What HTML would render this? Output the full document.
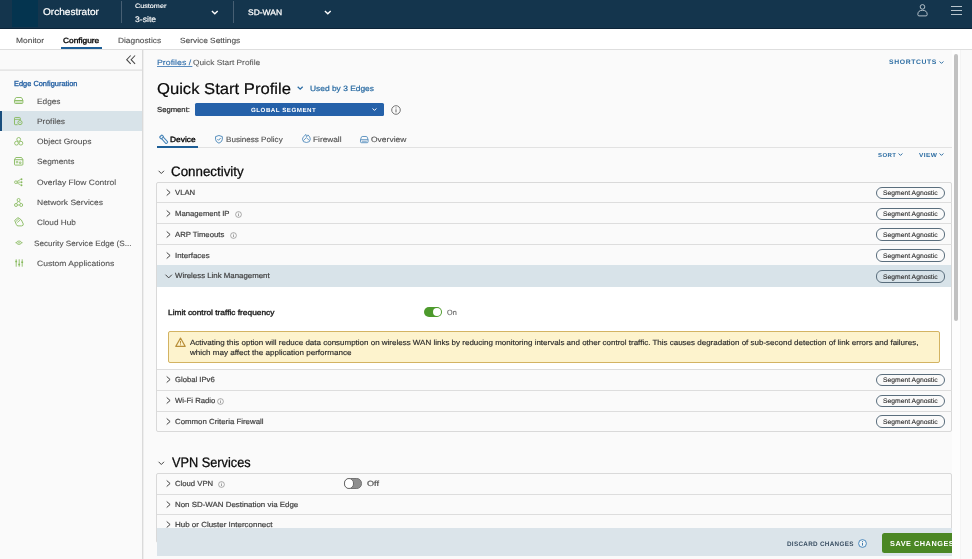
<!DOCTYPE html>
<html><head><meta charset="utf-8"><title>Orchestrator</title>
<style>
html,body{margin:0;padding:0;}
body{width:972px;height:559px;overflow:hidden;background:#fafafa;position:relative;font-family:"Liberation Sans",sans-serif;}
.a{position:absolute;box-sizing:border-box;}
.t{position:absolute;white-space:pre;line-height:12px;height:12px;transform-origin:0 50%;font-family:"Liberation Sans",sans-serif;z-index:2;}
svg{position:absolute;overflow:visible;}
#hdr{left:0;top:0;width:972px;height:29px;background:#14354d;border-bottom:1px solid #0c2438;}
#logo{left:12px;top:0;width:26px;height:27px;background:#04344f;}
.vd{width:1px;background:#475f73;top:1.3px;height:22px;}
#nav{left:0;top:29px;width:972px;height:20px;background:#ffffff;border-bottom:1px solid #dedede;height:21px;}
#side{left:0;top:50px;width:144px;height:509px;background:#fafafa;border-right:1px solid #eeeeee;}
#sideline{left:0;top:69px;width:142px;height:2px;background:#ececec;border-bottom:1px solid #e6e6e6;}
#sel{left:0;top:111px;width:142px;height:20px;background:#d8e3e9;}
#selbar{left:0;top:111px;width:2px;height:20px;background:#1a4f7e;}
.hl{height:1px;background:#dddddd;}
.panel{border:1px solid #d9d9d9;border-radius:2px;background:#fafafa;}
.pill{left:875.9px;width:69px;height:12.4px;border:1px solid #5a6e7d;border-radius:6px;background:transparent;z-index:1;}
#txt,#txt2{position:absolute;left:0;top:0;width:972px;height:559px;will-change:transform;text-rendering:geometricPrecision;}
#txt{z-index:2;}
#over{position:absolute;left:0;top:0;z-index:5;}
#txt2{z-index:10;}
#cover{position:absolute;left:0;top:0;z-index:20;}

</style></head>
<body>
<div class="a" id="hdr"></div>
<div class="a" id="logo"></div>
<div class="a vd" style="left:120.6px"></div>
<div class="a vd" style="left:233px"></div>
<!-- header chevrons -->
<svg style="left:211px;top:9.6px" width="7.6" height="5" viewBox="0 0 7.6 5"><path d="M0.9 0.9 L3.8 3.8 L6.7 0.9" fill="none" stroke="#fff" stroke-width="1.35"/></svg>
<svg style="left:323.8px;top:9.6px" width="7.6" height="5" viewBox="0 0 7.6 5"><path d="M0.9 0.9 L3.8 3.8 L6.7 0.9" fill="none" stroke="#fff" stroke-width="1.35"/></svg>
<!-- user icon -->
<svg style="left:917.1px;top:4.2px" width="11" height="13" viewBox="0 0 11 13"><circle cx="5.5" cy="2.9" r="2.3" fill="none" stroke="#c3ced6" stroke-width="0.9"/><path d="M0.8 10.6 C0.8 7.6 2.6 6.3 5.5 6.3 C8.4 6.3 10.2 7.6 10.2 10.6 C10.2 11.5 9.6 11.9 9 11.9 L2 11.9 C1.4 11.9 0.8 11.5 0.8 10.6 Z" fill="none" stroke="#c3ced6" stroke-width="0.9"/></svg>
<!-- hamburger -->
<div class="a" style="left:950.6px;top:6px;width:11.4px;height:1px;background:#b9c5cd"></div>
<div class="a" style="left:950.6px;top:10px;width:11.4px;height:1px;background:#b9c5cd"></div>
<div class="a" style="left:950.6px;top:14px;width:11.4px;height:1px;background:#b9c5cd"></div>

<div class="a" id="nav"></div>
<div class="a" style="left:61px;top:47.2px;width:40.5px;height:1.6px;background:#1d5e96"></div>

<div class="a" id="side"></div>
<div class="a" id="sideline"></div>
<div class="a" style="left:142px;top:50px;width:1px;height:509px;background:#dadada"></div>
<div class="a" id="sel"></div>
<div class="a" id="selbar"></div>
<!-- collapse icon -->
<svg style="left:125.6px;top:55.1px" width="10" height="9.4" viewBox="0 0 10 9.4"><path d="M4.7 0.5 L0.7 4.7 L4.7 8.9 M9.1 0.5 L5.1 4.7 L9.1 8.9" fill="none" stroke="#484848" stroke-width="1.05"/></svg>

<!-- main: title chevron -->
<svg style="left:296.6px;top:86.2px" width="6.4" height="4.6" viewBox="0 0 6.4 4.6"><path d="M0.7 0.7 L3.2 3.2 L5.7 0.7" fill="none" stroke="#2b6ca3" stroke-width="1.25"/></svg>
<!-- segment dropdown -->
<div class="a" style="left:195px;top:102.5px;width:189.3px;height:13.2px;background:#2561a9;border-radius:1.5px"></div>
<svg style="left:371.6px;top:108px" width="5" height="3.4" viewBox="0 0 5 3.4"><path d="M0.6 0.5 L2.5 2.4 L4.4 0.5" fill="none" stroke="#fff" stroke-width="1"/></svg>
<!-- info icon next to dropdown -->
<svg style="left:390.9px;top:104.9px" width="10" height="10" viewBox="0 0 10 10"><circle cx="5" cy="5" r="4.3" fill="none" stroke="#666" stroke-width="0.9"/><path d="M5 4.3 V7.4 M5 2.5 V3.4" stroke="#666" stroke-width="1"/></svg>
<!-- shortcuts chevron -->
<svg style="left:939.2px;top:61.3px" width="5" height="3.4" viewBox="0 0 5 3.4"><path d="M0.6 0.5 L2.5 2.4 L4.4 0.5" fill="none" stroke="#2e6ea3" stroke-width="1"/></svg>

<!-- tabs -->
<div class="a hl" style="left:157px;top:147.1px;width:795px;background:#e2e2e2"></div>
<div class="a" style="left:157.4px;top:145.7px;width:40.4px;height:2px;background:#1d5e96"></div>
<!-- sort/view chevrons -->
<svg style="left:898.3px;top:153.4px" width="5" height="3.4" viewBox="0 0 5 3.4"><path d="M0.6 0.5 L2.5 2.4 L4.4 0.5" fill="none" stroke="#2e6ea3" stroke-width="1"/></svg>
<svg style="left:939.4px;top:153.4px" width="5" height="3.4" viewBox="0 0 5 3.4"><path d="M0.6 0.5 L2.5 2.4 L4.4 0.5" fill="none" stroke="#2e6ea3" stroke-width="1"/></svg>

<!-- heading chevrons -->
<svg style="left:158px;top:169.5px" width="7" height="5" viewBox="0 0 7 5"><path d="M0.6 0.8 L3.3 3.5 L6 0.8" fill="none" stroke="#3a3a3a" stroke-width="0.95"/></svg>
<svg style="left:158px;top:460.6px" width="7" height="5" viewBox="0 0 7 5"><path d="M0.6 0.8 L3.3 3.5 L6 0.8" fill="none" stroke="#3a3a3a" stroke-width="0.95"/></svg>

<!-- Connectivity panel -->
<div class="a panel" style="left:156px;top:181.7px;width:796px;height:250.8px"></div>
<div class="a hl" style="left:157px;top:202.3px;width:794.5px"></div>
<div class="a hl" style="left:157px;top:223.2px;width:794.5px"></div>
<div class="a hl" style="left:157px;top:244.1px;width:794.5px"></div>
<div class="a" style="left:157px;top:265.2px;width:794px;height:21.4px;background:#d8e3e9"></div>
<div class="a" style="left:157px;top:286.6px;width:794px;height:82px;background:#ffffff"></div>
<div class="a hl" style="left:157px;top:368.5px;width:794.5px"></div>
<div class="a hl" style="left:157px;top:389.5px;width:794.5px"></div>
<div class="a hl" style="left:157px;top:410.7px;width:794.5px"></div>

<!-- VPN panel -->
<div class="a panel" style="left:156px;top:473px;width:796px;height:70px"></div>
<div class="a hl" style="left:157px;top:493.5px;width:794.5px"></div>
<div class="a hl" style="left:157px;top:514.2px;width:794.5px"></div>

<!-- toggle on -->
<div class="a" style="left:423.5px;top:307.3px;width:18.6px;height:10.2px;border-radius:5.1px;background:#4d9a2c"></div>
<div class="a" style="left:432.9px;top:308.3px;width:8.2px;height:8.2px;border-radius:50%;background:#fff"></div>
<!-- toggle off -->
<div class="a" style="left:343.7px;top:478.3px;width:18.7px;height:10.4px;border-radius:5.2px;background:#8e8e8e;border:1px solid #747474"></div>
<div class="a" style="left:343.7px;top:478.3px;width:10.4px;height:10.4px;border-radius:50%;background:#fff;border:1px solid #6a6a6a"></div>

<!-- warning -->
<div class="a" style="left:168.2px;top:330.6px;width:772px;height:32.8px;background:#fdf3cd;border:1px solid #d3b362;border-radius:2px"></div>
<svg style="left:174.6px;top:336.7px" width="11" height="10.4" viewBox="0 0 11 10.4"><path d="M5.5 1 L10.2 9.4 L0.8 9.4 Z" fill="none" stroke="#b98f3a" stroke-width="1.15" stroke-linejoin="round"/><path d="M5.5 3.9 V6.6 M5.5 7.4 V8.3" stroke="#b98f3a" stroke-width="1"/></svg>
<!-- sidebar icons -->

<!-- Edges: drive -->
<svg style="left:14px;top:97.2px" width="9.4" height="7" viewBox="0 0 9.4 7"><rect x="0.9" y="3.9" width="7.6" height="2.2" fill="#86b95c" opacity="0.35"/><path d="M0.5 3.4 L1.6 0.9 Q1.8 0.5 2.3 0.5 L7.1 0.5 Q7.6 0.5 7.8 0.9 L8.9 3.4 L8.9 5.6 Q8.9 6.5 8 6.5 L1.4 6.5 Q0.5 6.5 0.5 5.6 Z M0.5 3.5 L8.9 3.5" fill="none" stroke="#86b95c" stroke-width="0.9"/></svg>
<!-- Profiles: doc with gear -->
<svg style="left:14px;top:117.2px" width="9" height="8.4" viewBox="0 0 9 8.4"><path d="M3.6 7.7 L1.2 7.7 Q0.5 7.7 0.5 7 L0.5 1.2 Q0.5 0.5 1.2 0.5 L5.6 0.5 Q6.3 0.5 6.3 1.2 L6.3 3" fill="none" stroke="#86b95c" stroke-width="0.9"/><path d="M0.6 2.4 L6.2 2.4" stroke="#86b95c" stroke-width="0.8"/><circle cx="6" cy="5.6" r="2.1" fill="none" stroke="#86b95c" stroke-width="0.9"/><circle cx="6" cy="5.6" r="0.6" fill="#86b95c"/></svg>
<!-- Object Groups: three circles -->
<svg style="left:14px;top:137.2px" width="9.4" height="8.8" viewBox="0 0 9.4 8.8"><circle cx="4.7" cy="2.4" r="1.9" fill="none" stroke="#86b95c" stroke-width="0.85"/><circle cx="2.5" cy="6.2" r="1.9" fill="none" stroke="#86b95c" stroke-width="0.85"/><circle cx="6.9" cy="6.2" r="1.9" fill="none" stroke="#86b95c" stroke-width="0.85"/></svg>
<!-- Segments: box -->
<svg style="left:14px;top:157.4px" width="9.4" height="8.6" viewBox="0 0 9.4 8.6"><path d="M0.5 2.6 L1.8 0.5 L7.6 0.5 L8.9 2.6 L8.9 7.3 Q8.9 8.1 8.1 8.1 L1.3 8.1 Q0.5 8.1 0.5 7.3 Z M0.5 2.7 L8.9 2.7" fill="none" stroke="#86b95c" stroke-width="0.9"/><path d="M2.3 4.4 L3.8 4.4 L3.8 5.8 L2.3 5.8 Z M5.4 5 L7 5 L7 6.4 L5.4 6.4 Z" fill="none" stroke="#86b95c" stroke-width="0.7"/></svg>
<!-- Overlay flow control -->
<svg style="left:14.2px;top:178.2px" width="9.2" height="8.4" viewBox="0 0 9.2 8.4"><circle cx="1.9" cy="4.2" r="1.35" fill="none" stroke="#86b95c" stroke-width="0.8"/><path d="M3.2 4.2 L6.6 4.2 M3 3.5 L6.6 1.5 M3 4.9 L6.6 6.9" fill="none" stroke="#86b95c" stroke-width="0.75"/><circle cx="7.5" cy="1.2" r="0.95" fill="#86b95c"/><circle cx="7.5" cy="4.2" r="0.95" fill="#86b95c"/><circle cx="7.5" cy="7.2" r="0.95" fill="#86b95c"/></svg>
<!-- Network services -->
<svg style="left:14.2px;top:197.8px" width="9.2" height="9.2" viewBox="0 0 9.2 9.2"><circle cx="4.6" cy="2" r="1.5" fill="none" stroke="#86b95c" stroke-width="0.85"/><circle cx="2" cy="7" r="1.5" fill="none" stroke="#86b95c" stroke-width="0.85"/><circle cx="7.2" cy="7" r="1.5" fill="none" stroke="#86b95c" stroke-width="0.85"/><path d="M4 3.4 L2.6 5.6 M5.2 3.4 L6.6 5.6 M3.5 7 L5.7 7" stroke="#86b95c" stroke-width="0.8"/></svg>
<!-- Cloud hub -->
<svg style="left:13.8px;top:217.4px" width="10" height="9.6" viewBox="0 0 10 9.6"><path d="M0.7 3.4 L4 0.6 L7.4 3 L9.3 7 Q9.5 8.8 7.6 8.9 L4 8.9 Q2.6 8.8 2.3 7.4 Z" fill="none" stroke="#86b95c" stroke-width="0.9" stroke-linejoin="round"/><path d="M2 4.4 L5 1.6 M3.2 5.6 L6.4 2.8" stroke="#86b95c" stroke-width="0.8"/></svg>
<!-- SSE -->
<svg style="left:14.6px;top:240.2px" width="8" height="5.4" viewBox="0 0 8 5.4"><path d="M0.4 2.7 L1.8 2.7 M6.2 2.7 L7.6 2.7" stroke="#86b95c" stroke-width="0.8"/><ellipse cx="4" cy="2.7" rx="2.3" ry="1.7" fill="none" stroke="#86b95c" stroke-width="0.85"/><circle cx="4" cy="2.7" r="0.7" fill="#86b95c"/></svg>
<!-- Custom apps: sliders -->
<svg style="left:14.6px;top:259px" width="8.4" height="8" viewBox="0 0 8.4 8"><path d="M1.2 0.3 L1.2 7.7 M4.2 0.3 L4.2 7.7 M7.2 0.3 L7.2 7.7" stroke="#86b95c" stroke-width="0.85"/><path d="M0.3 2.4 L2.1 2.4 M3.3 5.4 L5.1 5.4 M6.3 3.2 L8.1 3.2" stroke="#86b95c" stroke-width="1.5"/></svg>

<!-- tab icons -->
<!-- device (wrench/plug tilted) -->
<svg style="left:158.6px;top:134.8px" width="9.6" height="8.8" viewBox="0 0 9.6 8.8"><g transform="rotate(-42 4.8 4.4)"><rect x="3.1" y="-0.2" width="3.4" height="2.6" rx="0.6" fill="none" stroke="#4a86b9" stroke-width="1.1"/><path d="M3.6 2.4 L3.6 8.6 Q3.6 9.2 4.2 9.2 L5.4 9.2 Q6 9.2 6 8.6 L6 2.4" fill="none" stroke="#4a86b9" stroke-width="1.05"/></g></svg>
<!-- business policy: shield check -->
<svg style="left:214.6px;top:134.9px" width="7.9" height="8.7" viewBox="0 0 8.4 9.2"><path d="M4.2 0.5 L7.8 1.7 L7.8 4.6 Q7.8 7.2 4.2 8.7 Q0.6 7.2 0.6 4.6 L0.6 1.7 Z" fill="none" stroke="#4a86b9" stroke-width="1" stroke-linejoin="round"/><path d="M2.6 4.4 L3.8 5.6 L6 3.2" fill="none" stroke="#4a86b9" stroke-width="1"/></svg>
<!-- firewall: flame -->
<svg style="left:301.6px;top:134.4px" width="8.8" height="9" viewBox="0 0 8.8 9"><path d="M4 0.5 Q5 1.6 4.4 2.6 Q6.2 2 6 0.9 Q8.3 3 8.3 5.2 Q8.3 8.5 4.4 8.5 Q0.5 8.5 0.5 5.2 Q0.5 3 2.6 2 Q2.8 1 4 0.5 Z" fill="none" stroke="#4a86b9" stroke-width="0.85" stroke-linejoin="round"/><path d="M1.4 6.6 L4.4 3.6 L7.2 6.4" fill="none" stroke="#4a86b9" stroke-width="0.8"/></svg>
<!-- overview: drive -->
<svg style="left:359.6px;top:135.8px" width="8.6" height="7.2" viewBox="0 0 8.6 7.2"><path d="M0.5 3.6 L1.5 0.9 Q1.7 0.5 2.2 0.5 L6.4 0.5 Q6.9 0.5 7.1 0.9 L8.1 3.6 L8.1 5.8 Q8.1 6.7 7.2 6.7 L1.4 6.7 Q0.5 6.7 0.5 5.8 Z M0.5 3.7 L8.1 3.7" fill="none" stroke="#4a86b9" stroke-width="0.85"/><path d="M1.8 5.3 L6.8 5.3" stroke="#4a86b9" stroke-width="0.7"/></svg>
<div class="a pill" style="top:186.60px"></div>
<div class="a pill" style="top:207.50px"></div>
<div class="a pill" style="top:228.40px"></div>
<div class="a pill" style="top:249.30px"></div>
<div class="a pill" style="top:270.20px"></div>
<div class="a pill" style="top:373.60px"></div>
<div class="a pill" style="top:394.50px"></div>
<div class="a pill" style="top:415.40px"></div>
<svg style="left:165.8px;top:189.20px" width="5" height="7" viewBox="0 0 5 7"><path d="M0.7 0.5 L4.1 3.5 L0.7 6.5" fill="none" stroke="#3a3a3a" stroke-width="0.95"/></svg>
<svg style="left:165.8px;top:210.10px" width="5" height="7" viewBox="0 0 5 7"><path d="M0.7 0.5 L4.1 3.5 L0.7 6.5" fill="none" stroke="#3a3a3a" stroke-width="0.95"/></svg>
<svg style="left:165.8px;top:231.00px" width="5" height="7" viewBox="0 0 5 7"><path d="M0.7 0.5 L4.1 3.5 L0.7 6.5" fill="none" stroke="#3a3a3a" stroke-width="0.95"/></svg>
<svg style="left:165.8px;top:251.80px" width="5" height="7" viewBox="0 0 5 7"><path d="M0.7 0.5 L4.1 3.5 L0.7 6.5" fill="none" stroke="#3a3a3a" stroke-width="0.95"/></svg>
<svg style="left:165.8px;top:376.00px" width="5" height="7" viewBox="0 0 5 7"><path d="M0.7 0.5 L4.1 3.5 L0.7 6.5" fill="none" stroke="#3a3a3a" stroke-width="0.95"/></svg>
<svg style="left:165.8px;top:396.90px" width="5" height="7" viewBox="0 0 5 7"><path d="M0.7 0.5 L4.1 3.5 L0.7 6.5" fill="none" stroke="#3a3a3a" stroke-width="0.95"/></svg>
<svg style="left:165.8px;top:417.90px" width="5" height="7" viewBox="0 0 5 7"><path d="M0.7 0.5 L4.1 3.5 L0.7 6.5" fill="none" stroke="#3a3a3a" stroke-width="0.95"/></svg>
<svg style="left:165.8px;top:480.00px" width="5" height="7" viewBox="0 0 5 7"><path d="M0.7 0.5 L4.1 3.5 L0.7 6.5" fill="none" stroke="#3a3a3a" stroke-width="0.95"/></svg>
<svg style="left:165.8px;top:500.70px" width="5" height="7" viewBox="0 0 5 7"><path d="M0.7 0.5 L4.1 3.5 L0.7 6.5" fill="none" stroke="#3a3a3a" stroke-width="0.95"/></svg>
<svg style="left:165.8px;top:521.30px" width="5" height="7" viewBox="0 0 5 7"><path d="M0.7 0.5 L4.1 3.5 L0.7 6.5" fill="none" stroke="#3a3a3a" stroke-width="0.95"/></svg>
<svg style="left:165.0px;top:274.2px" width="7.4" height="5" viewBox="0 0 7.4 5"><path d="M0.5 0.7 L3.7 3.9 L6.9 0.7" fill="none" stroke="#3a3a3a" stroke-width="0.95"/></svg>
<svg style="left:235.40px;top:210.60px" width="7" height="7" viewBox="0 0 7 7"><circle cx="3.5" cy="3.5" r="2.9" fill="none" stroke="#777" stroke-width="0.6"/><path d="M3.5 3.1 V5.1 M3.5 1.8 V2.5" stroke="#777" stroke-width="0.7"/></svg>
<svg style="left:230.20px;top:231.50px" width="7" height="7" viewBox="0 0 7 7"><circle cx="3.5" cy="3.5" r="2.9" fill="none" stroke="#777" stroke-width="0.6"/><path d="M3.5 3.1 V5.1 M3.5 1.8 V2.5" stroke="#777" stroke-width="0.7"/></svg>
<svg style="left:216.90px;top:397.70px" width="7" height="7" viewBox="0 0 7 7"><circle cx="3.5" cy="3.5" r="2.9" fill="none" stroke="#777" stroke-width="0.6"/><path d="M3.5 3.1 V5.1 M3.5 1.8 V2.5" stroke="#777" stroke-width="0.7"/></svg>
<svg style="left:218.30px;top:480.80px" width="7" height="7" viewBox="0 0 7 7"><circle cx="3.5" cy="3.5" r="2.9" fill="none" stroke="#777" stroke-width="0.6"/><path d="M3.5 3.1 V5.1 M3.5 1.8 V2.5" stroke="#777" stroke-width="0.7"/></svg>
<div id="txt">
<span class="t" id="s0" style="left:42.70px;top:7.08px;font-size:9.7px;color:#ffffff;-webkit-text-stroke:0.22px #ffffff;transform:scaleX(1.0382);">Orchestrator</span>
<span class="t" id="s1" style="left:135.00px;top:0.96px;font-size:6.3px;color:#ffffff;-webkit-text-stroke:0.12px #ffffff;transform:scaleX(1.1467);">Customer</span>
<span class="t" id="s2" style="left:135.00px;top:14.47px;font-size:8.2px;color:#ffffff;-webkit-text-stroke:0.15px #ffffff;transform:scaleX(1.0534);">3-site</span>
<span class="t" id="s3" style="left:247.90px;top:6.52px;font-size:8.0px;color:#ffffff;-webkit-text-stroke:0.25px #ffffff;transform:scaleX(1.0573);">SD-WAN</span>
<span class="t" id="s4" style="left:15.90px;top:34.62px;font-size:7.6px;color:#4f4f4f;-webkit-text-stroke:0.12px #4f4f4f;transform:scaleX(1.1094);">Monitor</span>
<span class="t" id="s5" style="left:63.00px;top:34.62px;font-size:7.6px;color:#000000;-webkit-text-stroke:0.32px #000000;transform:scaleX(1.0991);">Configure</span>
<span class="t" id="s6" style="left:118.20px;top:34.62px;font-size:7.6px;color:#4f4f4f;-webkit-text-stroke:0.12px #4f4f4f;transform:scaleX(1.0977);">Diagnostics</span>
<span class="t" id="s7" style="left:179.60px;top:34.62px;font-size:7.6px;color:#4f4f4f;-webkit-text-stroke:0.12px #4f4f4f;transform:scaleX(1.0970);">Service Settings</span>
<span class="t" id="s8" style="left:13.50px;top:77.70px;font-size:7.3px;color:#1c5a9f;-webkit-text-stroke:0.3px #1c5a9f;transform:scaleX(1.0163);">Edge Configuration</span>
<span class="t" id="s9" style="left:36.90px;top:95.60px;font-size:7.7px;color:#525252;-webkit-text-stroke:0.1px #525252;transform:scaleX(1.0774);">Edges</span>
<span class="t" id="s10" style="left:36.90px;top:115.60px;font-size:7.7px;color:#525252;-webkit-text-stroke:0.1px #525252;transform:scaleX(1.0920);">Profiles</span>
<span class="t" id="s11" style="left:36.90px;top:135.60px;font-size:7.7px;color:#525252;-webkit-text-stroke:0.1px #525252;transform:scaleX(1.0973);">Object Groups</span>
<span class="t" id="s12" style="left:36.90px;top:155.60px;font-size:7.7px;color:#525252;-webkit-text-stroke:0.1px #525252;transform:scaleX(1.0801);">Segments</span>
<span class="t" id="s13" style="left:37.00px;top:176.60px;font-size:7.7px;color:#525252;-webkit-text-stroke:0.1px #525252;transform:scaleX(1.1020);">Overlay Flow Control</span>
<span class="t" id="s14" style="left:37.00px;top:196.60px;font-size:7.7px;color:#525252;-webkit-text-stroke:0.1px #525252;transform:scaleX(1.1034);">Network Services</span>
<span class="t" id="s15" style="left:37.00px;top:216.60px;font-size:7.7px;color:#525252;-webkit-text-stroke:0.1px #525252;transform:scaleX(1.0680);">Cloud Hub</span>
<span class="t" id="s16" style="left:34.40px;top:237.60px;font-size:7.7px;color:#525252;-webkit-text-stroke:0.1px #525252;transform:scaleX(1.0612);">Security Service Edge (S...</span>
<span class="t" id="s17" style="left:37.00px;top:257.60px;font-size:7.7px;color:#525252;-webkit-text-stroke:0.1px #525252;transform:scaleX(1.1083);">Custom Applications</span>
<span class="t" id="s18" style="left:156.80px;top:56.62px;font-size:7.6px;color:#2a6aa8;-webkit-text-stroke:0.1px #2a6aa8;transform:scaleX(1.1575);text-decoration:underline;text-decoration-thickness:0.6px;text-underline-offset:0.6px;text-decoration-color:#5b8dbf;">Profiles /</span>
<span class="t" id="s19" style="left:189.00px;top:56.62px;font-size:7.6px;color:#2a6aa8;transform:scaleX(1.6000);text-decoration:underline;text-decoration-thickness:0.6px;text-underline-offset:0.6px;text-decoration-color:#5b8dbf;"> </span>
<span class="t" id="s20" style="left:192.80px;top:56.62px;font-size:7.6px;color:#5a5a5a;-webkit-text-stroke:0.1px #5a5a5a;transform:scaleX(1.0980);">Quick Start Profile</span>
<span class="t" id="s21" style="left:156.60px;top:83.52px;font-size:15.7px;color:#0a0a0a;-webkit-text-stroke:0.2px #0a0a0a;transform:scaleX(1.0592);">Quick Start Profile</span>
<span class="t" id="s22" style="left:310.00px;top:82.62px;font-size:7.6px;color:#2b6ca3;-webkit-text-stroke:0.22px #2b6ca3;transform:scaleX(1.1064);">Used by 3 Edges</span>
<span class="t" id="s23" style="left:156.80px;top:103.70px;font-size:7.3px;color:#2b2b2b;-webkit-text-stroke:0.22px #2b2b2b;transform:scaleX(1.0533);">Segment:</span>
<span class="t" id="s24" style="left:251.20px;top:105.04px;font-size:6.0px;color:#ffffff;font-weight:700;letter-spacing:0.45px;transform:scaleX(1.0383);">GLOBAL SEGMENT</span>
<span class="t" id="s25" style="left:888.80px;top:56.88px;font-size:6.6px;color:#2e6ea3;font-weight:700;letter-spacing:0.6px;transform:scaleX(1.0341);">SHORTCUTS</span>
<span class="t" id="s26" style="left:170.30px;top:133.60px;font-size:7.7px;color:#000000;-webkit-text-stroke:0.32px #000000;transform:scaleX(1.0936);">Device</span>
<span class="t" id="s27" style="left:225.70px;top:133.60px;font-size:7.7px;color:#4f4f4f;-webkit-text-stroke:0.12px #4f4f4f;transform:scaleX(1.0530);">Business Policy</span>
<span class="t" id="s28" style="left:312.80px;top:133.60px;font-size:7.7px;color:#4f4f4f;-webkit-text-stroke:0.12px #4f4f4f;transform:scaleX(1.0761);">Firewall</span>
<span class="t" id="s29" style="left:370.60px;top:133.60px;font-size:7.7px;color:#4f4f4f;-webkit-text-stroke:0.12px #4f4f4f;transform:scaleX(1.1046);">Overview</span>
<span class="t" id="s30" style="left:878.00px;top:150.07px;font-size:5.9px;color:#2e6ea3;font-weight:700;letter-spacing:0.4px;transform:scaleX(1.0245);">SORT</span>
<span class="t" id="s31" style="left:918.70px;top:150.07px;font-size:5.9px;color:#2e6ea3;font-weight:700;letter-spacing:0.4px;transform:scaleX(1.1073);">VIEW</span>
<span class="t" id="s32" style="left:171.20px;top:166.04px;font-size:13.7px;color:#0a0a0a;-webkit-text-stroke:0.28px #0a0a0a;transform:scaleX(0.9750);">Connectivity</span>
<span class="t" id="s33" style="left:171.60px;top:457.04px;font-size:13.7px;color:#0a0a0a;-webkit-text-stroke:0.28px #0a0a0a;transform:scaleX(0.9309);">VPN Services</span>
<span class="t" id="s34" style="left:174.70px;top:186.68px;font-size:7.4px;color:#424242;-webkit-text-stroke:0.2px #424242;transform:scaleX(1.0460);">VLAN</span>
<span class="t" id="s35" style="left:174.70px;top:207.68px;font-size:7.4px;color:#424242;-webkit-text-stroke:0.2px #424242;transform:scaleX(1.0443);">Management IP</span>
<span class="t" id="s36" style="left:174.70px;top:228.68px;font-size:7.4px;color:#424242;-webkit-text-stroke:0.2px #424242;transform:scaleX(1.0465);">ARP Timeouts</span>
<span class="t" id="s37" style="left:174.70px;top:249.68px;font-size:7.4px;color:#424242;-webkit-text-stroke:0.2px #424242;transform:scaleX(1.0662);">Interfaces</span>
<span class="t" id="s38" style="left:174.70px;top:269.68px;font-size:7.4px;color:#424242;-webkit-text-stroke:0.2px #424242;transform:scaleX(1.0612);">Wireless Link Management</span>
<span class="t" id="s39" style="left:174.70px;top:373.68px;font-size:7.4px;color:#424242;-webkit-text-stroke:0.2px #424242;transform:scaleX(1.0388);">Global IPv6</span>
<span class="t" id="s40" style="left:174.70px;top:394.68px;font-size:7.4px;color:#424242;-webkit-text-stroke:0.2px #424242;transform:scaleX(1.0438);">Wi-Fi Radio</span>
<span class="t" id="s41" style="left:174.70px;top:415.68px;font-size:7.4px;color:#424242;-webkit-text-stroke:0.2px #424242;transform:scaleX(1.0615);">Common Criteria Firewall</span>
<span class="t" id="s42" style="left:174.70px;top:477.68px;font-size:7.4px;color:#424242;-webkit-text-stroke:0.2px #424242;transform:scaleX(1.0421);">Cloud VPN</span>
<span class="t" id="s43" style="left:174.70px;top:498.68px;font-size:7.4px;color:#424242;-webkit-text-stroke:0.2px #424242;transform:scaleX(1.0699);">Non SD-WAN Destination via Edge</span>
<span class="t" id="s44" style="left:174.70px;top:518.68px;font-size:7.4px;color:#424242;-webkit-text-stroke:0.2px #424242;transform:scaleX(1.0788);">Hub or Cluster Interconnect</span>
<span class="t" id="s45" style="left:883.20px;top:187.88px;font-size:6.6px;color:#2f2f2f;-webkit-text-stroke:0.12px #2f2f2f;transform:scaleX(1.0272);">Segment Agnostic</span>
<span class="t" id="s46" style="left:883.20px;top:208.88px;font-size:6.6px;color:#2f2f2f;-webkit-text-stroke:0.12px #2f2f2f;transform:scaleX(1.0272);">Segment Agnostic</span>
<span class="t" id="s47" style="left:883.20px;top:229.88px;font-size:6.6px;color:#2f2f2f;-webkit-text-stroke:0.12px #2f2f2f;transform:scaleX(1.0272);">Segment Agnostic</span>
<span class="t" id="s48" style="left:883.20px;top:250.88px;font-size:6.6px;color:#2f2f2f;-webkit-text-stroke:0.12px #2f2f2f;transform:scaleX(1.0272);">Segment Agnostic</span>
<span class="t" id="s49" style="left:883.20px;top:271.88px;font-size:6.6px;color:#2f2f2f;-webkit-text-stroke:0.12px #2f2f2f;transform:scaleX(1.0272);">Segment Agnostic</span>
<span class="t" id="s50" style="left:883.20px;top:374.88px;font-size:6.6px;color:#2f2f2f;-webkit-text-stroke:0.12px #2f2f2f;transform:scaleX(1.0272);">Segment Agnostic</span>
<span class="t" id="s51" style="left:883.20px;top:395.88px;font-size:6.6px;color:#2f2f2f;-webkit-text-stroke:0.12px #2f2f2f;transform:scaleX(1.0272);">Segment Agnostic</span>
<span class="t" id="s52" style="left:883.20px;top:416.88px;font-size:6.6px;color:#2f2f2f;-webkit-text-stroke:0.12px #2f2f2f;transform:scaleX(1.0272);">Segment Agnostic</span>
<span class="t" id="s53" style="left:168.40px;top:306.65px;font-size:7.5px;color:#1d1d1d;-webkit-text-stroke:0.36px #1d1d1d;transform:scaleX(1.1112);">Limit control traffic frequency</span>
<span class="t" id="s54" style="left:447.30px;top:306.62px;font-size:7.6px;color:#5a5a5a;-webkit-text-stroke:0.1px #5a5a5a;transform:scaleX(0.9565);">On</span>
<span class="t" id="s55" style="left:367.20px;top:477.62px;font-size:7.6px;color:#505050;-webkit-text-stroke:0.2px #505050;transform:scaleX(1.2000);">Off</span>
<span class="t" id="s56" style="left:189.60px;top:336.68px;font-size:7.4px;color:#2b2b2b;-webkit-text-stroke:0.16px #2b2b2b;transform:scaleX(1.0807);">Activating this option will reduce data consumption on wireless WAN links by reducing monitoring intervals and other control traffic. This causes degradation of sub-second detection of link errors and failures,</span>
<span class="t" id="s57" style="left:189.60px;top:346.68px;font-size:7.4px;color:#2b2b2b;-webkit-text-stroke:0.16px #2b2b2b;transform:scaleX(1.0893);">which may affect the application performance</span>
</div>
<div id="over">
<!-- footer bar -->
<div class="a" style="left:156.5px;top:527.6px;width:795.5px;height:28px;background:#dbe4ea"></div>
<div class="a" style="left:882.3px;top:533.2px;width:75px;height:20.3px;background:#4b8724;border-radius:2.5px"></div>
<svg style="left:858px;top:538.9px" width="9" height="9" viewBox="0 0 9 9"><circle cx="4.5" cy="4.5" r="3.9" fill="#eef3f6" stroke="#3a7db5" stroke-width="0.9"/><path d="M4.5 3.8 V6.6 M4.5 2.1 V3" stroke="#2e6ea3" stroke-width="0.9"/></svg>

</div>
<div id="txt2">
<span class="t" id="s58" style="left:786.80px;top:538.94px;font-size:6.4px;color:#3a4f63;font-weight:700;letter-spacing:0.3px;transform:scaleX(0.9902);">DISCARD CHANGES</span>
<span class="t" id="s59" style="left:889.90px;top:537.73px;font-size:7.2px;color:#ffffff;font-weight:700;letter-spacing:0.5px;transform:scaleX(1.0195);">SAVE CHANGES</span>
</div>
<div id="cover">
<!-- right cover & scrollbar -->
<div class="a" style="left:952px;top:50px;width:20px;height:509px;background:#fafafa"></div>
<div class="a" style="left:952px;top:50px;width:8.5px;height:509px;background:#fdfdfd;border-right:1px solid #f4f4f4"></div>
<div class="a" style="left:954px;top:54px;width:4px;height:266.6px;background:#c1c1c1;border-radius:2px"></div>

</div>
</body></html>
